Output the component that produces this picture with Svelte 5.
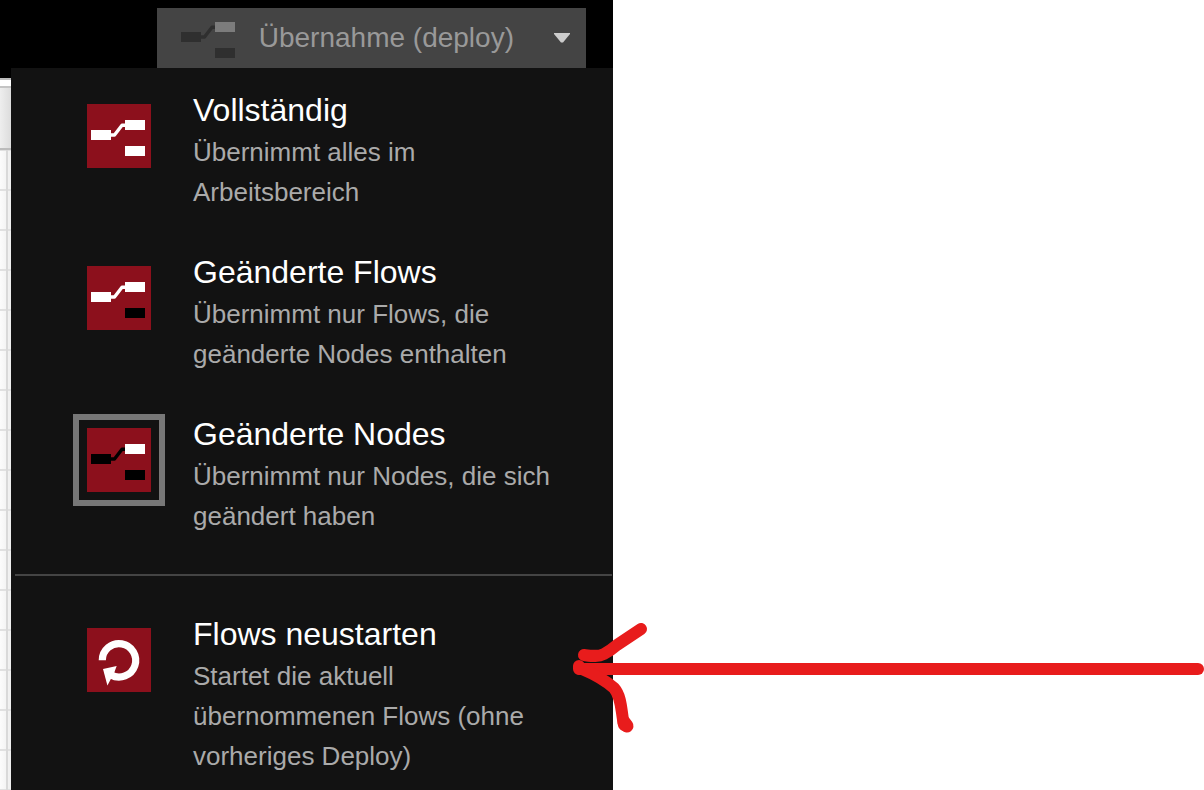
<script>
  const deployTypes = [
    {
      id: 'full',
      label: 'Vollständig',
      description: 'Übernimmt alles im Arbeitsbereich',
      source: '#fff',
      target: '#fff',
      other: '#fff'
    },
    {
      id: 'flows',
      label: 'Geänderte Flows',
      description: 'Übernimmt nur Flows, die geänderte Nodes enthalten',
      source: '#fff',
      target: '#fff',
      other: '#000'
    },
    {
      id: 'nodes',
      label: 'Geänderte Nodes',
      description: 'Übernimmt nur Nodes, die sich geändert haben',
      source: '#000',
      target: '#fff',
      other: '#000'
    }
  ];

  let selected = $state('nodes');
</script>

{#snippet flowShapes(source, target, other)}
  <path d="M23 31H27.500L35 21.300H39" fill="none" stroke={source} stroke-width="3.400" stroke-linejoin="round" />
  <rect x="4" y="26" width="20" height="10" fill={source} />
  <rect x="38" y="16" width="20" height="10" fill={target} />
  <rect x="38" y="42" width="20" height="10" fill={other} />
{/snippet}

<div class="page">
  <div class="editor">
    <header>
      <div class="deploy">
        <button class="deploy-main">
          <svg width="54" height="44" viewBox="4 10 54 44" aria-hidden="true">
            {@render flowShapes('#2f2f2f', '#7c7c7c', '#2f2f2f')}
          </svg>
          <span>Übernahme (deploy)</span>
        </button>
        <button class="deploy-caret" aria-label="Optionen">
          <svg width="18" height="10" viewBox="0 0 18 10" aria-hidden="true">
            <path d="M1 0h16v1L10 9.500H8L1 1z" fill="#ccc" />
          </svg>
        </button>
      </div>
    </header>

    <div class="body">
      <div class="workspace">
        <div class="topbar"></div>
        <div class="tabs"></div>
        <div class="grid"></div>
      </div>

      <nav class="menu">
        <ul>
          {#each deployTypes as type (type.id)}
            <li>
              <button class="item" aria-pressed={selected === type.id} onclick={() => (selected = type.id)}>
                <span class="frame" class:selected={selected === type.id}>
                  <svg width="64" height="64" viewBox="0 0 64 64" aria-hidden="true">
                    {@render flowShapes(type.source, type.target, type.other)}
                  </svg>
                </span>
                <span class="text">
                  <span class="label">{type.label}</span>
                  <span class="description">{type.description}</span>
                </span>
              </button>
            </li>
          {/each}
        </ul>
        <hr />
        <ul>
          <li>
            <button class="item">
              <span class="frame">
                <svg width="64" height="64" viewBox="0 0 64 64" aria-hidden="true">
                  <path d="M15.300 32.300A16.700 16.700 0 1 1 24 47" fill="none" stroke="#fff" stroke-width="7.200" />
                  <path d="M16 41l13.700-3-2.400 6.500L20.400 57.500z" fill="#fff" />
                </svg>
              </span>
              <span class="text">
                <span class="label">Flows neustarten</span>
                <span class="description">Startet die aktuell übernommenen Flows (ohne vorheriges Deploy)</span>
              </span>
            </button>
          </li>
        </ul>
      </nav>
    </div>
  </div>

  <!-- hand-drawn arrow pointing at the restart entry -->
  <svg class="arrow" aria-hidden="true">
    <line x1="10" y1="49" x2="100%" y2="49" />
    <path d="M14 35C22 36 28 37 34 34Q40 31 47 25L71 9" />
    <path d="M9 46v3H12C24 54 36 61 44 68C52 77 51 92 54 105" />
    <path d="M54 102L57 106" stroke-width="13" />
  </svg>
</div>

<style>
  :global(body) {
    margin: 0;
    background: #fff;
  }

  .page {
    position: relative;
    min-height: 100vh;
    display: flex;
    font-family: "Liberation Sans", Arial, sans-serif;
  }

  .editor {
    flex: 0 1 613px;
    min-width: 0;
    display: flex;
    flex-direction: column;
    background: #000;
  }

  header {
    display: flex;
    justify-content: flex-end;
    padding: 8px 27px 0 0;
  }

  .deploy {
    display: flex;
    height: 60px;
    background: #444;
  }

  button {
    margin: 0;
    border: 0;
    background: none;
    font-family: inherit;
    cursor: pointer;
  }

  .deploy-main {
    display: flex;
    align-items: center;
    gap: 24px;
    padding: 0 24px;
    color: #999;
    font-size: 28px;
    white-space: nowrap;
  }

  .deploy-caret {
    display: flex;
    align-items: center;
    justify-content: center;
    width: 48px;
    padding: 0;
  }

  .body {
    flex: 1;
    display: flex;
  }

  .workspace {
    flex: 0 0 11px;
    display: flex;
    flex-direction: column;
  }

  .topbar {
    height: 10px;
  }

  .tabs {
    box-sizing: border-box;
    height: 72px;
    border-top: 2px solid #bbb;
    border-bottom: 2px solid #bbb;
    background:
      linear-gradient(#fff 6px, #c4c4c4 6px, #c4c4c4 8px, transparent 8px),
      linear-gradient(to right, #eee, #dcdcdc);
  }

  .grid {
    flex: 1;
    background:
      linear-gradient(to right, transparent 6px, #d9d9d9 6px, #d9d9d9 8px, transparent 8px),
      repeating-linear-gradient(#e0e0e0 0 1px, transparent 1px 39px, #e0e0e0 39px 40px),
      linear-gradient(to right, #fcfcfc, #eee);
  }

  .menu {
    flex: 1;
    min-width: 0;
    padding-top: 22px;
    background: #121212;
  }

  ul {
    display: flex;
    flex-direction: column;
    gap: 40px;
    margin: 0;
    padding: 0;
    list-style: none;
  }

  hr {
    height: 2px;
    margin: 38px 1px 38px 4px;
    border: 0;
    background: #444;
  }

  .item {
    display: flex;
    align-items: flex-start;
    gap: 28px;
    width: 100%;
    padding: 0 48px 0 62px;
    text-align: left;
  }

  .frame {
    flex: none;
    padding: 8px;
    border: 6px solid transparent;
  }

  .frame.selected {
    border-color: #777;
  }

  .frame svg {
    display: block;
    background: #8c101c;
  }

  .text {
    display: flex;
    flex-direction: column;
    gap: 2px;
    line-height: 40px;
  }

  .label {
    color: #fff;
    font-size: 32px;
  }

  .description {
    color: #aaa;
    font-size: 26px;
  }

  .arrow {
    position: absolute;
    top: 620px;
    left: 570px;
    width: calc(100% - 576px);
    height: 120px;
    overflow: visible;
    fill: none;
    stroke: #e81c1c;
    stroke-width: 12px;
    stroke-linecap: round;
    stroke-linejoin: round;
    pointer-events: none;
  }
</style>
